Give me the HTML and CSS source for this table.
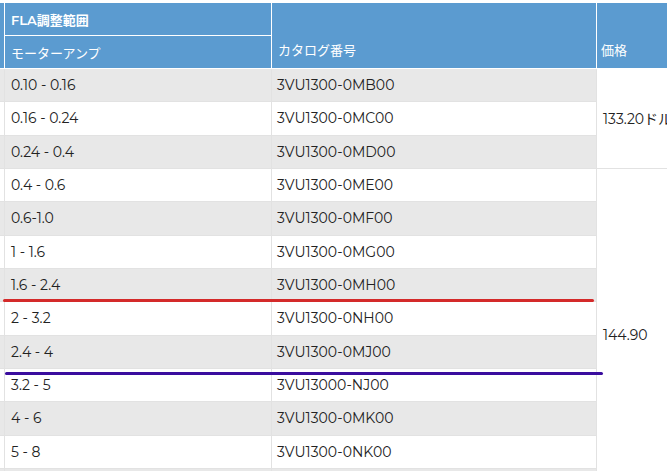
FILE: index.html
```html
<!DOCTYPE html>
<html lang="ja">
<head>
<meta charset="utf-8">
<title>FLA</title>
<link rel="stylesheet" href="styles.css">
</head>
<body>
<table class="t">
  <thead>
    <tr class="hr1">
      <th class="stub" rowspan="2"></th>
      <th class="c1 strong">FLA調整範囲</th>
      <th class="c2 bottom" rowspan="2">カタログ番号</th>
      <th class="c3 bottom" rowspan="2">価格</th>
    </tr>
    <tr class="hr2">
      <th class="c1">モーターアンプ</th>
    </tr>
  </thead>
  <tbody>
    <tr class="g"><td class="stub"></td><td>0.10 - 0.16</td><td>3VU1300-0MB00</td><td class="price" rowspan="3">133.20ドル</td></tr>
    <tr><td class="stub"></td><td>0.16 - 0.24</td><td>3VU1300-0MC00</td></tr>
    <tr class="g"><td class="stub"></td><td>0.24 - 0.4</td><td>3VU1300-0MD00</td></tr>
    <tr><td class="stub"></td><td>0.4 - 0.6</td><td>3VU1300-0ME00</td><td class="price" rowspan="10">144.90</td></tr>
    <tr class="g"><td class="stub"></td><td>0.6-1.0</td><td>3VU1300-0MF00</td></tr>
    <tr><td class="stub"></td><td>1 - 1.6</td><td>3VU1300-0MG00</td></tr>
    <tr class="g"><td class="stub"></td><td>1.6 - 2.4</td><td>3VU1300-0MH00</td></tr>
    <tr><td class="stub"></td><td>2 - 3.2</td><td>3VU1300-0NH00</td></tr>
    <tr class="g"><td class="stub"></td><td>2.4 - 4</td><td>3VU1300-0MJ00</td></tr>
    <tr><td class="stub"></td><td>3.2 - 5</td><td>3VU13000-NJ00</td></tr>
    <tr class="g"><td class="stub"></td><td>4 - 6</td><td>3VU1300-0MK00</td></tr>
    <tr><td class="stub"></td><td>5 - 8</td><td>3VU1300-0NK00</td></tr>
    <tr class="g"><td class="stub"></td><td></td><td></td></tr>
  </tbody>
</table>
<div class="mark red"></div>
<div class="mark purple"></div>
</body>
</html>
```
FILE: styles.css
```css
html, body {
  margin: 0;
  padding: 0;
  overflow: hidden;
  background: #fff;
}
body {
  position: relative;
  width: 667px;
  height: 471px;
  font-family: "Montserrat", "Lato", "Noto Sans CJK JP", sans-serif;
  font-size: 14px;
  color: #222;
}
.t {
  margin-top: 3px;
  border-collapse: separate;
  border-spacing: 0;
  table-layout: fixed;
  width: 797px;
}
.t th, .t td {
  box-sizing: border-box;
  padding: 0 0 0 6px;
  text-align: left;
  font-weight: 400;
  white-space: nowrap;
}
.t th {
  background: #5b9bd0;
  color: #fff;
  font-size: 13px;
  border-right: 1px solid #fff;
  border-bottom: 1px solid #fff;
  vertical-align: middle;
}
.t th.strong { font-weight: 600; }
.t th.bottom { vertical-align: bottom; padding-bottom: 9px; }
.t th.c3 { padding-left: 4px; }
.hr1 { height: 33px; }
.hr2 { height: 33px; }
.stub { width: 5px; padding: 0 !important; }
.c1 { width: 267px; }
.c2 { width: 325px; }
.c3 { width: 200px; }
.t td {
  height: 33.33px;
  border-right: 1px solid #e2e2e2;
  border-bottom: 1px solid #e2e2e2;
  vertical-align: middle;
}
.t td:nth-child(3) { padding-left: 5px; }
tr.g td { background: #e8e8e8; }
.t td.price {
  background: #fff;
  padding-left: 6px;
  border-right: none;
}
.mark {
  position: absolute;
  border-radius: 2px;
}
.red {
  left: 3px;
  top: 299px;
  width: 591px;
  height: 3px;
  background: #d42a2a;
}
.purple {
  left: 5px;
  top: 372px;
  width: 598px;
  height: 3px;
  background: #3a0d9e;
}
```
